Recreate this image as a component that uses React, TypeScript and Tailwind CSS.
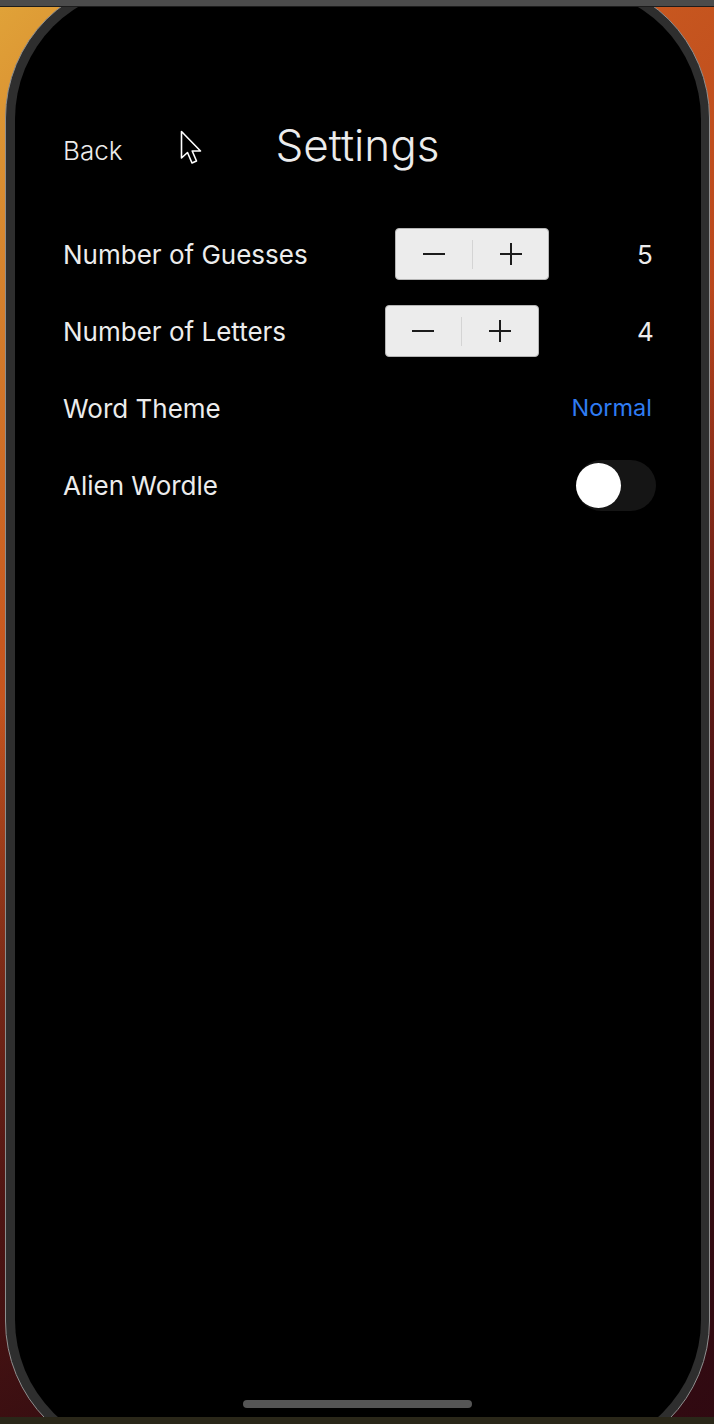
import React from "react";

function Stepper() {
  return (
    <div className="flex h-[52px] w-[154px] items-center rounded-[4px] border border-[#b5b5b5] bg-[#ececec]">
      <div className="flex h-full flex-1 items-center justify-center">
        <svg width="24" height="24" viewBox="0 0 24 24">
          <path d="M1 12H23" stroke="#1c1c1c" strokeWidth="2" />
        </svg>
      </div>
      <div className="h-[29px] w-px bg-[#d4d4d4]" />
      <div className="flex h-full flex-1 items-center justify-center">
        <svg width="24" height="24" viewBox="0 0 24 24">
          <path d="M1 12H23M12 1V23" stroke="#1c1c1c" strokeWidth="2" />
        </svg>
      </div>
    </div>
  );
}

function StepRow({ label, value }: { label: string; value: string }) {
  return (
    <div className="flex h-[52px] items-center">
      <span className="whitespace-nowrap">{label}</span>
      <div className="flex flex-1 justify-center">
        <Stepper />
      </div>
      <span className="w-[15px] text-right">{value}</span>
    </div>
  );
}

export default function App() {
  return (
    <div
      className="flex h-[1424px] w-[714px] flex-col overflow-hidden bg-black text-[#ececec]"
      style={{ fontFamily: "Inter, 'Liberation Sans', sans-serif" }}
    >
      <div className="h-[6px] border-b border-[#1c1c1c] bg-[#4b4b4b] box-content" />
      <div className="relative h-[1410px] overflow-hidden bg-[linear-gradient(150deg,rgba(0,0,0,0)_0%,rgba(0,0,0,0)_38%,rgba(45,6,16,0.5)_55%,rgba(40,6,16,0.72)_66%,rgba(30,5,14,0.82)_80%,rgba(30,5,14,0.85)_100%),linear-gradient(135deg,#e0a238_0%,#c8581f_30%,#b03a1c_60%,#9a2424_100%)]">
        <div className="ml-[5px] mt-[-29px] h-[1483px] w-[705px] rounded-[140px] border border-[#8e8e8e] bg-[#2e2e2e] p-[9px] pr-[8px]">
          <div className="flex h-full flex-col rounded-[131px] bg-black pl-[48px] pr-[49px] pt-[130px]">
            <div className="relative grid h-[60px] grid-cols-[1fr_auto_1fr] items-center">
              <span className="mt-[6px] text-[26px] font-light leading-none">Back</span>
              <span className="mb-[6px] text-[44px] font-light leading-none">Settings</span>
              <span />
            </div>
            <div className="mt-[50px] flex flex-col gap-[25px] text-[26px] font-normal">
              <StepRow label="Number of Guesses" value="5" />
              <StepRow label="Number of Letters" value="4" />
              <div className="flex h-[52px] items-center justify-between">
                <span>Word Theme</span>
                <span className="text-[23.5px] text-[#2f7cf3]">Normal</span>
              </div>
              <div className="flex h-[52px] items-center justify-between">
                <span>Alien Wordle</span>
                <div className="-mr-[4px] flex h-[51px] w-[80px] items-center rounded-full bg-[#151515]">
                  <div className="h-[45px] w-[45px] rounded-full bg-white" />
                </div>
              </div>
            </div>
            <div className="flex-1" />
            <div className="mb-[43px] flex justify-center">
              <div className="h-[8px] w-[229px] rounded-full bg-[#555555]" />
            </div>
          </div>
        </div>
        <svg
          className="absolute left-[180px] top-[123px]"
          width="26"
          height="36"
          viewBox="0 0 26 36"
        >
          <path
            d="M1.5 1.5 L1.5 28 L7.5 22.5 L12 33 L16.5 31 L12.2 21 L20.5 21 Z"
            fill="#000"
            stroke="#fff"
            strokeWidth="1.6"
            strokeLinejoin="round"
          />
        </svg>
      </div>
      <div className="h-[7px] bg-[#2a2719]" />
    </div>
  );
}
